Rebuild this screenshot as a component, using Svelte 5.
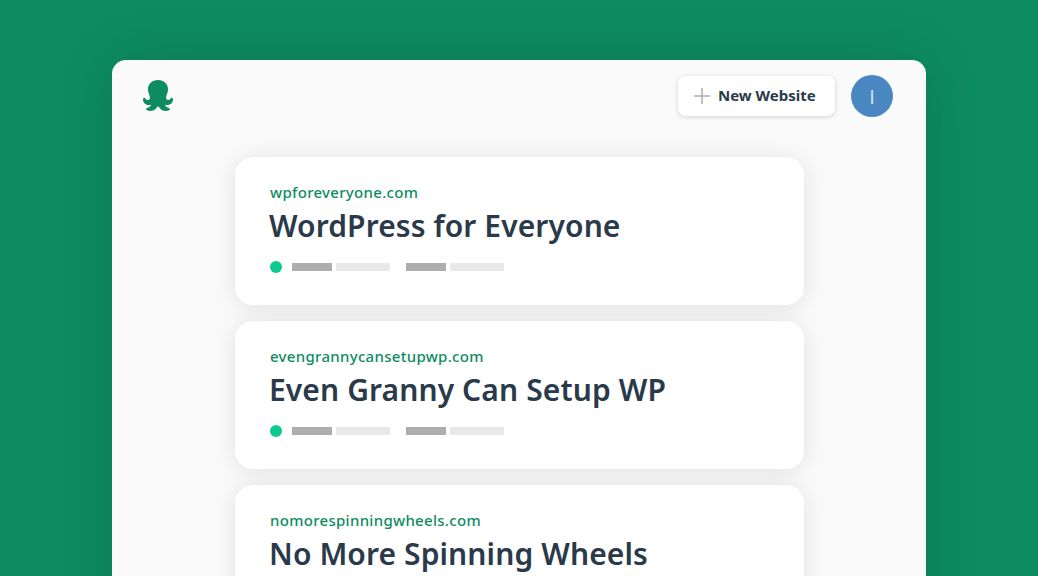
<script>
	const sites = [
		{ domain: "wpforeveryone.com", name: "WordPress for Everyone" },
		{ domain: "evengrannycansetupwp.com", name: "Even Granny Can Setup WP" },
		{ domain: "nomorespinningwheels.com", name: "No More Spinning Wheels" },
	];
</script>

<div class="page">
	<div class="panel">
		<header class="top">
			<svg class="logo" viewBox="0 0 30 32" width="30" height="32" aria-label="Logo">
				<path
					fill="#0e8c61"
					d="M15 0C21 0 25 4 25 9C25 12 24 14 23.300 16C22.800 18 23.300 20 25 20C26.500 20 27.500 19 28 18C28.800 17.500 30 18.200 30 19.200C30 22.500 27.500 25 24.500 25C23.500 25 22.800 24.800 22 24.400C22.300 26 23.800 27.500 26 28C27.200 28.300 27.200 29.800 26 30.300C23 32 18.500 31 16.500 27.800C16 27 15.500 26.500 15 26.500C14.500 26.500 14 27 13.500 27.800C11.500 31 7 32 4 30.300C2.800 29.800 2.800 28.300 4 28C6.200 27.500 7.700 26 8 24.400C7.200 24.800 6.500 25 5.500 25C2.500 25 0 22.500 0 19.200C0 18.200 1.200 17.500 2 18C2.500 19 3.500 20 5 20C6.700 20 7.200 18 6.700 16C6 14 5 12 5 9C5 4 9 0 15 0Z"
				/>
			</svg>
			<div class="actions">
				<button class="new">
					<svg viewBox="0 0 16 16" width="16" height="16"><path d="M8 0v16M0 8h16" stroke="#adadad" stroke-width="1.500" fill="none" /></svg>
					<span class="label">New Website</span>
				</button>
				<div class="avatar">I</div>
			</div>
		</header>
		<main class="list">
			{#each sites as site}
				<section class="card">
					<div class="domain">{site.domain}</div>
					<h2>{site.name}</h2>
					<div class="meta">
						<span class="dot"></span>
						<span class="bars"><i class="dark"></i><i class="light"></i></span>
						<span class="bars"><i class="dark"></i><i class="light"></i></span>
					</div>
				</section>
			{/each}
		</main>
	</div>
</div>

<style>
	:global(body) {
		margin: 0;
		background: #0e8c61;
		font-family: "Noto Sans", sans-serif;
	}
	.page {
		height: 576px;
		overflow: hidden;
		padding-top: 60px;
		box-sizing: border-box;
	}
	.panel {
		width: 814px;
		height: 600px;
		margin: 0 auto;
		background: #fafafa;
		border-radius: 14px;
		box-shadow: 0 0 60px rgba(0, 0, 0, 0.14);
		box-sizing: border-box;
		padding: 15px 33px 0 31px;
	}
	.top {
		display: flex;
		justify-content: space-between;
		align-items: center;
		height: 42px;
	}
	.logo {
		display: block;
	}
	.actions {
		display: flex;
		align-items: center;
		gap: 16px;
	}
	.new {
		display: flex;
		align-items: center;
		gap: 8px;
		height: 40px;
		width: 157px;
		box-sizing: border-box;
		padding: 0 16px;
		border: none;
		background: #fff;
		border-radius: 8px;
		box-shadow: 0 1px 5px rgba(0, 0, 0, 0.16);
		font: 700 15px "Noto Sans", sans-serif;
		color: #2a3a4a;
		white-space: nowrap;
	}
	.label {
		margin-bottom: 2px;
	}
	.avatar {
		width: 42px;
		height: 42px;
		border-radius: 50%;
		background: #4a86c0;
		color: #d8e6f3;
		display: flex;
		align-items: center;
		justify-content: center;
		font: 400 20px "Open Sans", sans-serif;
	}
	.list {
		width: 569px;
		margin: 40px 0 0 92px;
		display: flex;
		flex-direction: column;
		gap: 16px;
	}
	.card {
		height: 148px;
		box-sizing: border-box;
		padding: 25px 35px 0;
		background: #fff;
		border-radius: 18px;
		box-shadow: 0 2px 24px rgba(0, 0, 0, 0.1);
	}
	.domain {
		font-size: 15px;
		line-height: 20px;
		font-weight: 500;
		letter-spacing: 0.3px;
		color: #0e8c61;
	}
	h2 {
		margin: 3px 0 0 -1px;
		font-size: 30px;
		line-height: 42px;
		font-weight: 600;
		letter-spacing: 0.1px;
		color: #2a3a4a;
		white-space: nowrap;
	}
	.meta {
		display: flex;
		align-items: center;
		margin-top: 14px;
		height: 12px;
	}
	.dot {
		width: 12px;
		height: 12px;
		border-radius: 50%;
		background: #0cc98f;
		margin-right: 10px;
	}
	.bars {
		display: flex;
		gap: 4px;
		margin-right: 16px;
	}
	.bars i {
		display: block;
		height: 8px;
	}
	.dark {
		width: 40px;
		background: #adadad;
	}
	.light {
		width: 54px;
		background: #e8e8e8;
	}
</style>
